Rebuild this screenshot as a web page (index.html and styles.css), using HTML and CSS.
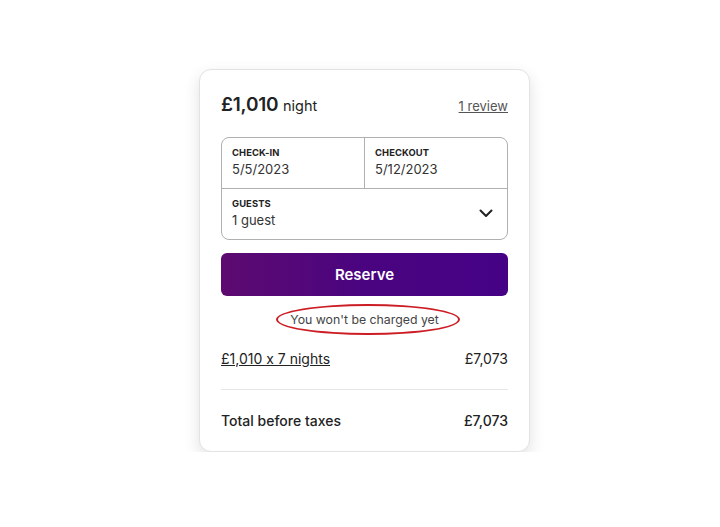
FILE: index.html
```html
<!DOCTYPE html>
<html>
<head>
<meta charset="utf-8">
<link rel="stylesheet" href="styles.css">
</head>
<body>
<div class="page">
  <div class="card">
    <div class="head">
      <div class="price"><span class="amount">£1,010</span> <span class="unit">night</span></div>
      <a class="review">1 review</a>
    </div>
    <div class="picker">
      <div class="row">
        <div class="cell left">
          <div class="label">CHECK-IN</div>
          <div class="value">5/5/2023</div>
        </div>
        <div class="cell">
          <div class="label">CHECKOUT</div>
          <div class="value">5/12/2023</div>
        </div>
      </div>
      <div class="row guests">
        <div class="cell">
          <div class="label">GUESTS</div>
          <div class="value">1 guest</div>
        </div>
        <svg class="chev" width="16" height="16" viewBox="0 0 16 16"><path d="M2.5 5.5 L8 11 L13.5 5.5" fill="none" stroke="#222" stroke-width="2" stroke-linecap="round" stroke-linejoin="round"/></svg>
      </div>
    </div>
    <button class="reserve">Reserve</button>
    <div class="note"><span class="circled">You won't be charged yet</span></div>
    <div class="line">
      <a class="calc">£1,010 x 7 nights</a>
      <span>£7,073</span>
    </div>
    <div class="divider"></div>
    <div class="line total">
      <span>Total before taxes</span>
      <span>£7,073</span>
    </div>
  </div>
</div>
</body>
</html>
```
FILE: styles.css
```css
html, body { margin: 0; padding: 0; background: #fff; }
body { font-family: Inter, "Noto Sans", "Liberation Sans", sans-serif; color: #222; font-feature-settings: "calt" 0; }
.page { padding: 69px 0 0 199px; }
.card {
  width: 331px;
  box-sizing: border-box;
  border: 1px solid #e2e2e2;
  border-radius: 12px;
  box-shadow: 0 6px 16px rgba(0,0,0,0.12);
  padding: 23px 21px 22px 21px;
  background: #fff;
}
.head { display: flex; justify-content: space-between; align-items: baseline; height: 25px; }
.amount { font-size: 19px; font-weight: 600; letter-spacing: -0.2px; }
.unit { font-size: 14.5px; font-weight: 400; }
.review { font-size: 13px; color: #555; text-decoration: underline; }
.picker {
  margin-top: 19px;
  border: 1px solid #b0b0b0;
  border-radius: 8px;
}
.row { display: flex; height: 50px; }
.row + .row { border-top: 1px solid #b0b0b0; }
.cell { flex: 1; padding: 9px 10px 0 10px; box-sizing: border-box; }
.cell.left { border-right: 1px solid #b0b0b0; flex: 0 0 143px; }
.label { font-size: 9.4px; font-weight: 700; letter-spacing: 0.1px; line-height: 12px; }
.value { font-size: 13px; color: #333; line-height: 18px; margin-top: 1px; }
.chev { align-self: center; margin-right: 13px; margin-top: -2px; }
.reserve {
  display: block;
  width: 100%;
  height: 43px;
  margin-top: 13px;
  border: 0;
  border-radius: 6px;
  background: linear-gradient(90deg, #5d0a70 0%, #4a0480 50%, #450285 100%);
  color: #fff;
  font-family: inherit;
  font-size: 15px;
  font-weight: 600;
}
.note { text-align: center; margin-top: 15px; height: 18px; font-size: 12.3px; color: #444; line-height: 18px; }
.circled { position: relative; display: inline-block; }
.circled::after {
  content: "";
  position: absolute;
  left: -14px; right: -21px; top: -7px; bottom: -6px;
  border: 2px solid #cc1d24;
  border-radius: 50%;
}
.line { display: flex; justify-content: space-between; align-items: center; font-size: 14px; }
.note + .line { margin-top: 21px; }
.calc { text-decoration: underline; color: #222; }
.divider { height: 1px; background: #e6e6e6; margin: 22px 0 22px; }
.total { font-weight: 500; }
```
